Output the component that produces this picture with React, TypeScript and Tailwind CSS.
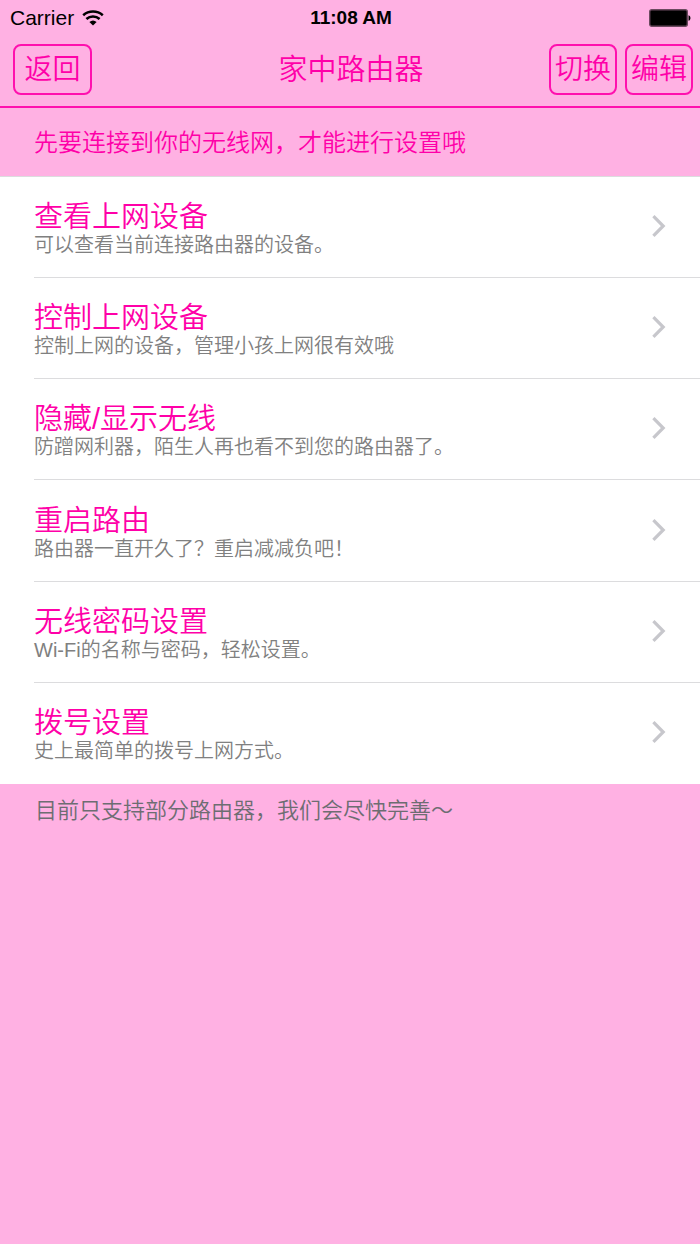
import React from 'react';

const MENU_ITEMS = [
  { title: '查看上网设备', description: '可以查看当前连接路由器的设备。' },
  { title: '控制上网设备', description: '控制上网的设备，管理小孩上网很有效哦' },
  { title: '隐藏/显示无线', description: '防蹭网利器，陌生人再也看不到您的路由器了。' },
  { title: '重启路由', description: '路由器一直开久了？重启减减负吧！' },
  { title: '无线密码设置', description: 'Wi-Fi的名称与密码，轻松设置。' },
  { title: '拨号设置', description: '史上最简单的拨号上网方式。' },
];

function StatusBar() {
  return (
    <div className="grid h-9 grid-cols-3 items-center pr-2 pl-[10px] text-black">
      <div className="flex items-center gap-2 text-[21px] leading-6">
        <span>Carrier</span>
        <svg width="22" height="16" viewBox="0 0 22 16" fill="none" stroke="currentColor" strokeWidth="2.6" aria-hidden="true">
          <path d="M1.2 5.2a15 15 0 0 1 19.6 0" />
          <path d="M4.4 9a10 10 0 0 1 13.2 0" />
          <path d="M11 15.6 7.4 12a5.4 5.4 0 0 1 7.2 0Z" fill="currentColor" stroke="none" />
        </svg>
      </div>
      <span className="text-center text-[19px] leading-6 font-bold">11:08 AM</span>
      <svg className="justify-self-end" width="43" height="18" viewBox="0 0 43 18" aria-hidden="true">
        <rect x="0.7" y="0.7" width="37.6" height="16.6" rx="2" fill="#000" stroke="#6b4a5f" strokeWidth="1.4" />
        <path d="M39.5 6.2c2.6.6 2.6 5 0 5.6Z" fill="#000" />
      </svg>
    </div>
  );
}

function NavButton({ label, className }: { label: string; className: string }) {
  return (
    <button type="button" className={`h-[51px] rounded-lg border-2 border-[#ff10ae] pt-px text-[28px] leading-8 ${className}`}>
      {label}
    </button>
  );
}

function NavBar() {
  return (
    <nav className="grid h-[72px] grid-cols-[1fr_auto_1fr] items-start border-b-2 border-[#ff10ae] pt-2 pr-[7px] pl-[9px] text-[#ff00a8]">
      <div className="pl-1">
        <NavButton label="返回" className="w-[79px]" />
      </div>
      <h1 className="pt-px text-[29px] leading-[51px]">家中路由器</h1>
      <div className="flex justify-end gap-2">
        <NavButton label="切换" className="w-[68px]" />
        <NavButton label="编辑" className="w-[68px]" />
      </div>
    </nav>
  );
}

function MenuRow({ title, description }: { title: string; description: string }) {
  return (
    <li className="group flex bg-white pl-[34px]">
      <a href="#" className="flex flex-1 items-center justify-between border-b border-[#dcdcde] pr-[34px] group-last:border-b-0">
        <div className="pt-1">
          <h2 className="text-[29px] leading-8 text-[#ff00a8]">{title}</h2>
          <p className="text-xl leading-6 text-[#808080]">{description}</p>
        </div>
        <svg className="mb-0.5" width="14" height="22" viewBox="0 0 14 22" fill="none" stroke="#c7c7cc" strokeWidth="3.2" aria-hidden="true">
          <path d="m1.4 1.2 9.8 9.8-9.8 9.8" />
        </svg>
      </a>
    </li>
  );
}

export default function App() {
  return (
    <div
      lang="zh-CN"
      className="min-h-screen bg-[#ffb1e3] font-['Liberation_Sans','Noto_Sans_CJK_SC',sans-serif] font-[350]"
    >
      <header>
        <StatusBar />
        <NavBar />
      </header>
      <main>
        <p className="px-[34px] pt-[19px] pb-[17px] text-2xl leading-8 text-[#ff00a8]">先要连接到你的无线网，才能进行设置哦</p>
        <ul className="grid min-h-[608px] auto-rows-fr border-t border-[#dcdcde]">
          {MENU_ITEMS.map(item => (
            <MenuRow key={item.title} title={item.title} description={item.description} />
          ))}
        </ul>
        <p className="px-[35px] pt-[13px] text-[22px] leading-7 text-[#6d6d72]">目前只支持部分路由器，我们会尽快完善～</p>
      </main>
    </div>
  );
}
